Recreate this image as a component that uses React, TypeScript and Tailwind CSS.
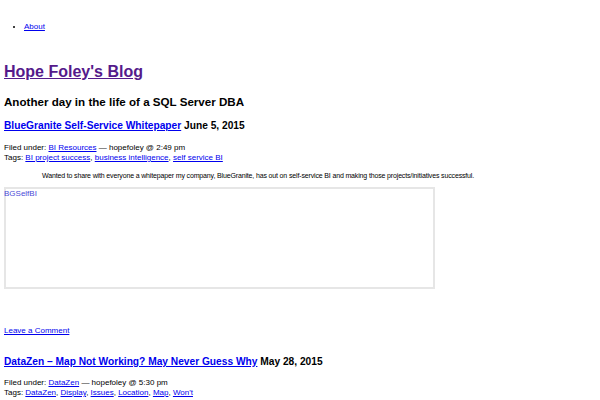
export default function App() {
  const link = "text-[#0000ee] underline";
  return (
    <div className="min-h-[400px] bg-white text-black font-['Liberation_Sans',Arial,sans-serif] text-[8px] leading-[10px]">
      {/* nav */}
      <ul className="list-disc pl-[24px] pt-[22px]">
        <li>
          <a href="#" className={link}>About</a>
        </li>
      </ul>
      {/* header */}
      <h1 className="mt-[30px] px-[4px] text-[16px] leading-[20px] font-bold">
        <a href="#" className="text-[#551a8b] underline">Hope Foley's Blog</a>
      </h1>
      <h2 className="mt-[12px] px-[4px] text-[11.6px] leading-[15px] font-bold">
        Another day in the life of a SQL Server DBA
      </h2>
      {/* post 1 */}
      <div className="px-[4px] mt-[10px]">
        <h3 className="text-[10.2px] leading-[13px] font-bold">
          <a href="#" className={link}>BlueGranite Self-Service Whitepaper</a> June 5, 2015
        </h3>
        <div className="mt-[11px]">
          Filed under: <a href="#" className={link}>BI Resources</a> — hopefoley @ 2:49 pm
        </div>
        <div>
          Tags: <a href="#" className={link}>BI project success</a>,{" "}
          <a href="#" className={link}>business intelligence</a>,{" "}
          <a href="#" className={link}>self service BI</a>
        </div>
        <p className="mt-[8px] pl-[38px] text-[7px] tracking-[-0.15px]">
          Wanted to share with everyone a whitepaper my company, BlueGranite, has out on self-service BI and making those projects/initiatives successful.
        </p>
        <div className="mt-[6px] w-[431px] h-[102px] border-2 border-[#e6e6e6] text-[#4b4bd8]">
          <span className="-ml-[2px]">BGSelfBI</span>
        </div>
        <div className="mt-[37px]">
          <a href="#" className={link}>Leave a Comment</a>
        </div>
      </div>
      {/* post 2 */}
      <div className="px-[4px] mt-[19px]">
        <h3 className="text-[10.2px] leading-[13px] font-bold">
          <a href="#" className={link}>DataZen – Map Not Working? May Never Guess Why</a> May 28, 2015
        </h3>
        <div className="mt-[10px]">
          Filed under: <a href="#" className={link}>DataZen</a> — hopefoley @ 5:30 pm
        </div>
        <div>
          Tags: <a href="#" className={link}>DataZen</a>, <a href="#" className={link}>Display</a>,{" "}
          <a href="#" className={link}>Issues</a>, <a href="#" className={link}>Location</a>,{" "}
          <a href="#" className={link}>Map</a>, <a href="#" className={link}>Won't</a>
        </div>
      </div>
    </div>
  );
}
